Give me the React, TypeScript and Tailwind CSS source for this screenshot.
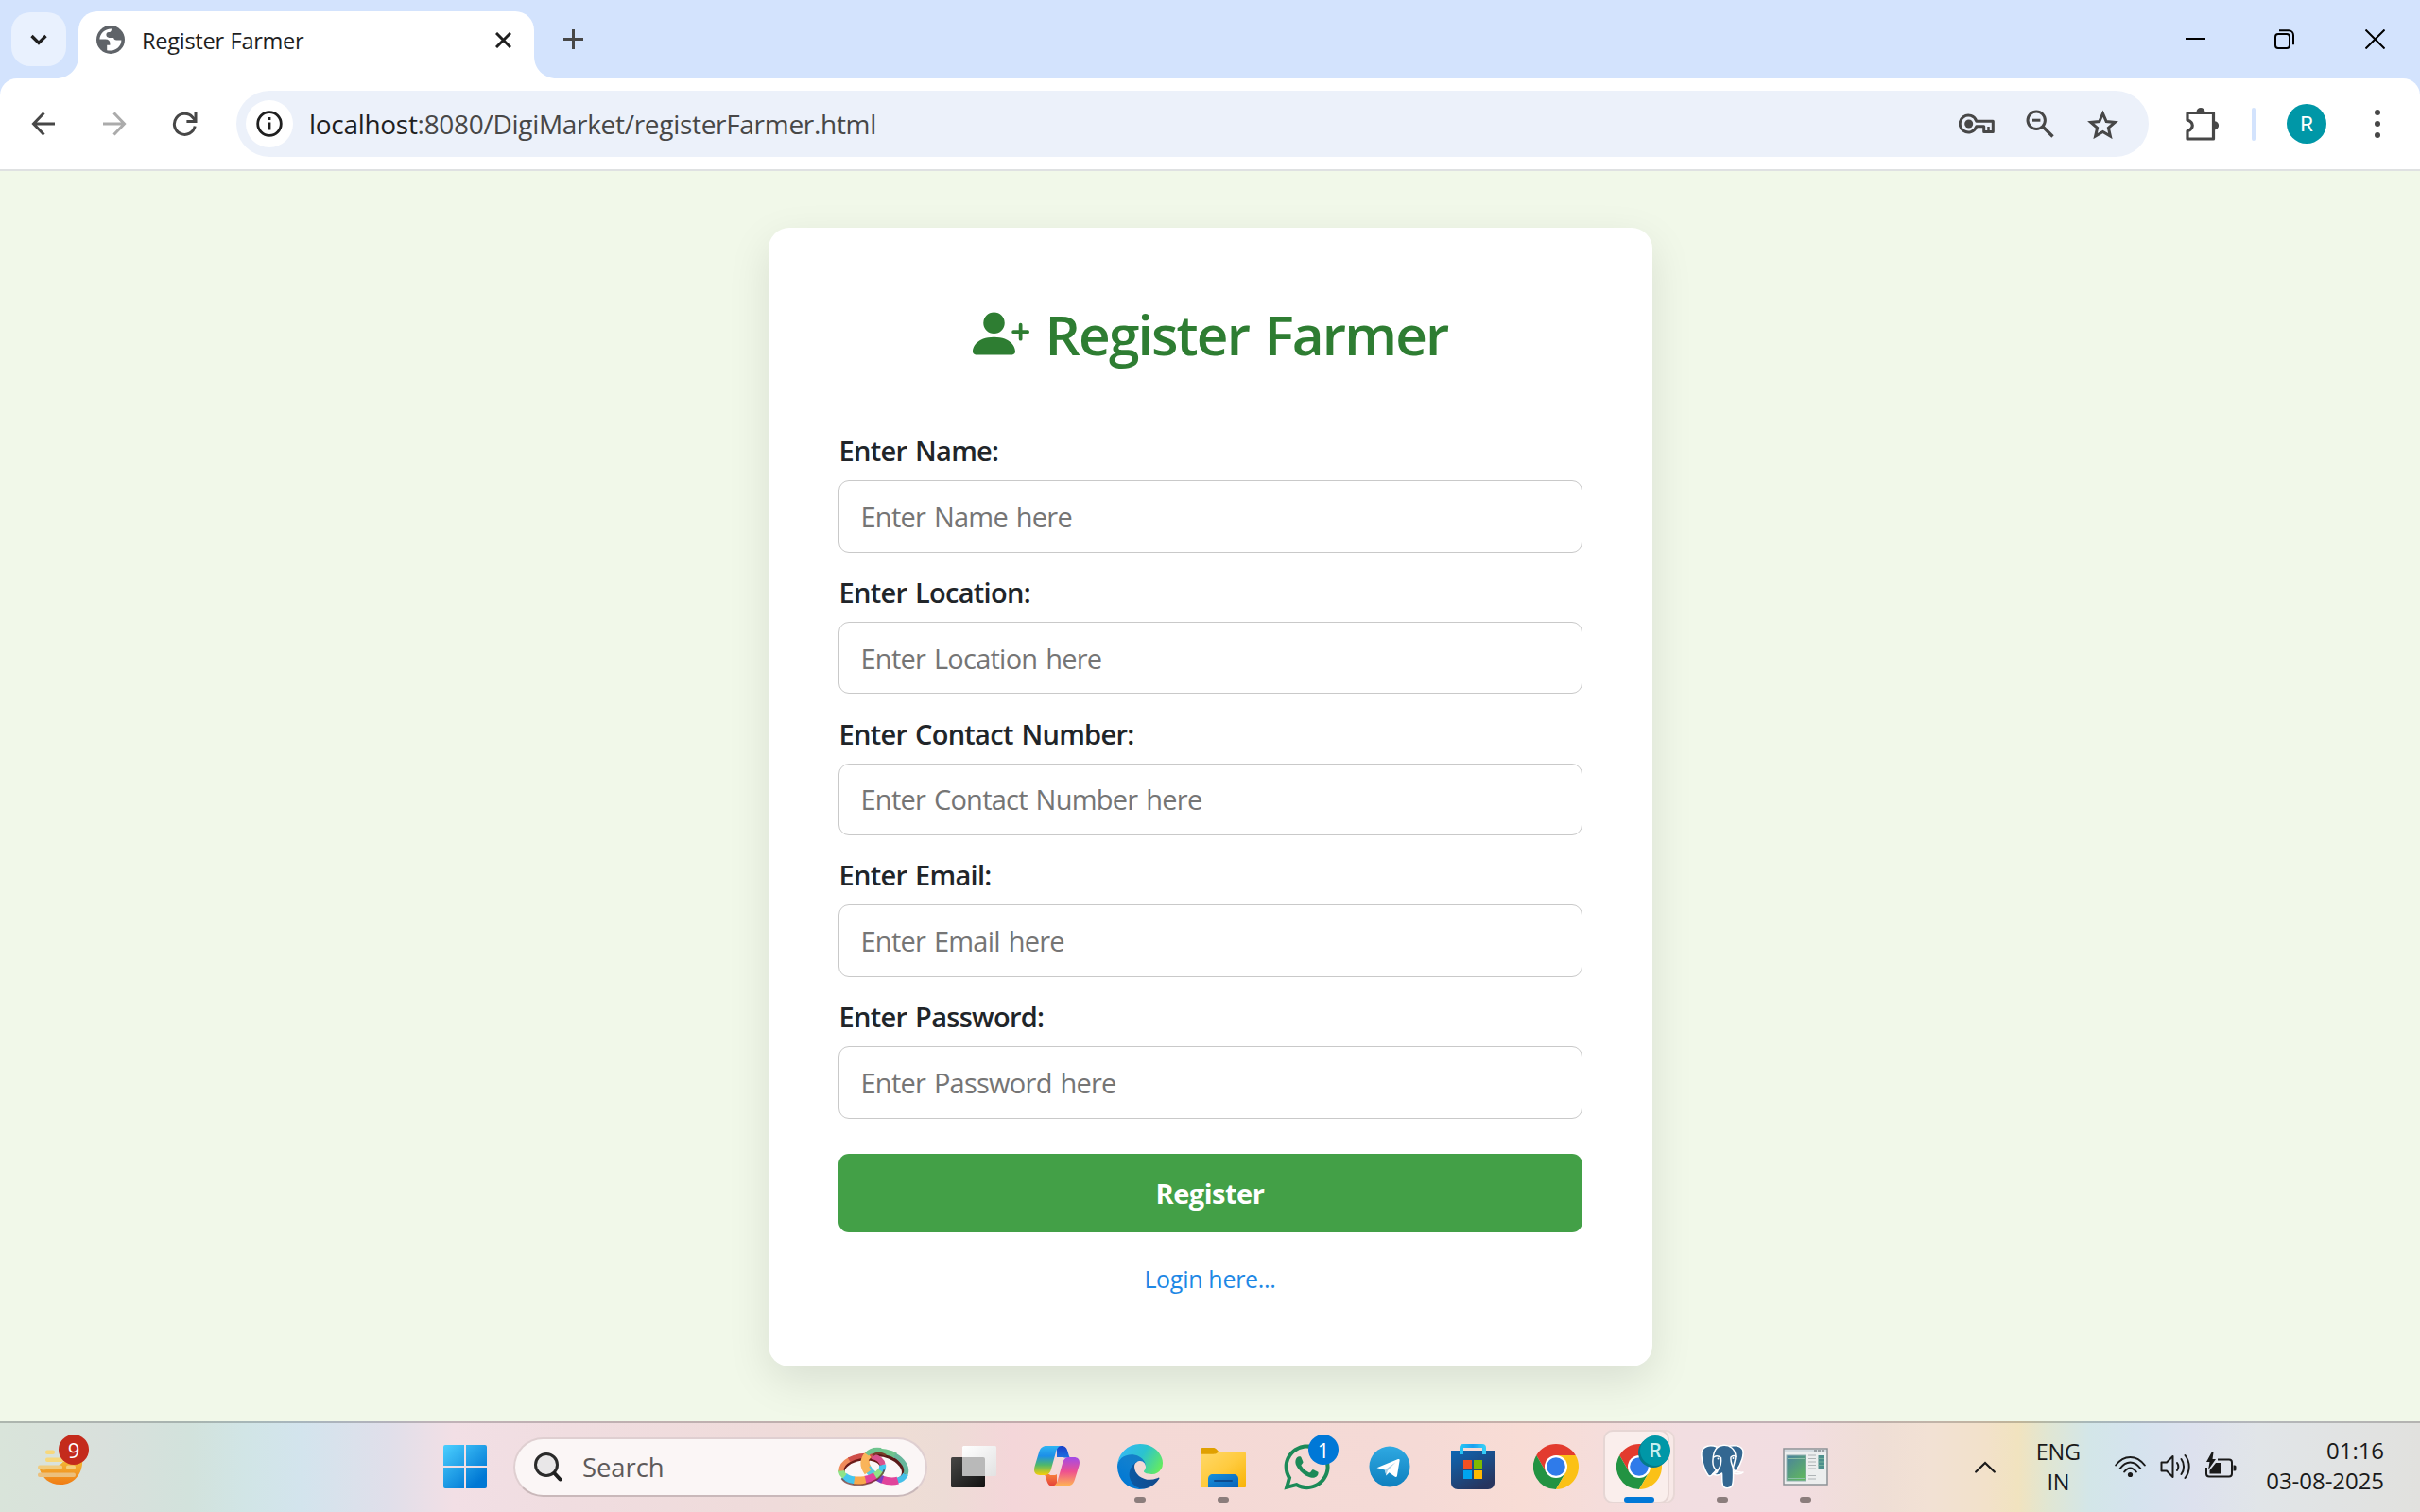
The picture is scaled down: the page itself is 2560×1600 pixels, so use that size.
import type { ReactNode } from "react";
import { BsPersonPlusFill } from "react-icons/bs";
import { FaWhatsapp } from "react-icons/fa";

/* ---------- Browser icons ---------- */

function Globe() {
  return (
    <svg className="size-[30px]" viewBox="0 0 30 30">
      <circle cx="15" cy="15" r="15" fill="#5f6368" />
      <path
        d="M16 3.4C9 3.2 3.6 8.4 3.4 14.6h6.2c3.2 0 4.8 1.6 4.8 4.6v1.6h-3.2v5.4c7.800 1.800 15.200-3.400 15.200-10.800h-5.200c-1.800 0-2.800-.8-3-2.400h-4.600c-2-.2-3.200-1.400-3.200-3.200 0-1.600 1-2.600 2.600-2.800 1.800 0 3-1 3-3.600z"
        fill="#fff"
      />
    </svg>
  );
}

function Key() {
  return (
    <svg className="h-[26px] w-[39px]" viewBox="0 0 39 26" fill="none" stroke="#474747" strokeWidth="3">
      <path d="M18.800 10.200h17.500v11.200h-9.600v-5.600h-7.900a9 9 0 1 1 0-5.600z" strokeLinejoin="round" />
      <circle cx="10.700" cy="13" r="4.500" fill="#474747" stroke="none" />
      <path d="M31.500 16v5" strokeWidth="2.500" />
    </svg>
  );
}

function ZoomOut() {
  return (
    <svg className="size-[30px]" viewBox="0 0 30 30" fill="none" stroke="#474747" strokeWidth="3">
      <circle cx="11.200" cy="11.200" r="9.200" />
      <path d="M18 18l10.500 10.500" strokeWidth="3.400" />
      <path d="M7 11.200h8.400" />
    </svg>
  );
}

function Star() {
  return (
    <svg className="h-[31px] w-[33px]" viewBox="0 0 33 31" fill="none" stroke="#474747" strokeWidth="3">
      <path d="M16.500 4.200l3.700 8.300 9.100.9-6.900 6 2 8.700-7.900-4.600-7.900 4.600 2-8.700-6.900-6 9.100-.9z" />
    </svg>
  );
}

function Puzzle() {
  return (
    <svg className="size-[36px]" viewBox="0 0 36 36">
      <path
        d="M3 6.500h26.500v27.500h-27.500v-8.200c7-2.600 7-9.400 0-11.800v-7z"
        fill="none"
        stroke="#474747"
        strokeWidth="3.200"
        strokeLinejoin="round"
      />
      <path d="M11.500 5.500a4.500 4.500 0 0 1 9 0zM30.500 15.200a4.600 4.600 0 0 1 0 9.200z" fill="#474747" />
    </svg>
  );
}

/* ---------- Browser window ---------- */

function TabStrip() {
  return (
    <div className="flex h-[83px] items-end bg-[#d3e3fd]">
      <div className="mb-[13px] ml-3 flex h-[57px] w-[58px] items-center justify-center rounded-[20px] bg-[#e9f1fe]">
        <svg className="h-[12px] w-[18px]" viewBox="0 0 18 12" fill="none" stroke="#1f1f1f" strokeWidth="3.300">
          <path d="M1.500 2L9 9.500 16.500 2" />
        </svg>
      </div>
      <div className="relative ml-[13px] flex h-[71px] w-[482px] items-center rounded-t-[20px] bg-white pb-[11px] pl-[19px] pr-[24px]">
        <Globe />
        <div className="ml-[18px] flex-1 pt-[2px] text-[23.600px] leading-8 tracking-[-0.300px] text-[#1f1f1f] [word-spacing:1px]">
          Register Farmer
        </div>
        <svg className="size-[17px]" viewBox="0 0 17 17" stroke="#1f1f1f" strokeWidth="3">
          <path d="M1 1l15 15M16 1L1 16" />
        </svg>
        <svg className="absolute bottom-0 -left-6 size-6" viewBox="0 0 24 24">
          <path d="M24 0v24H0C14 24 24 14 24 0z" fill="#fff" />
        </svg>
        <svg className="absolute -right-6 bottom-0 size-6" viewBox="0 0 24 24">
          <path d="M0 0v24h24C10 24 0 14 0 0z" fill="#fff" />
        </svg>
      </div>
      <svg className="mb-[31px] ml-[31px] size-[21px]" viewBox="0 0 21 21" stroke="#474747" strokeWidth="3">
        <path d="M10.500 0v21M0 10.500h21" />
      </svg>
      <div className="mr-[37px] mb-[31px] ml-auto flex items-center">
        <svg className="h-[21px] w-[21px]" viewBox="0 0 21 21" stroke="#000" strokeWidth="2">
          <path d="M0 10h21" />
        </svg>
        <svg className="mr-[75px] ml-[73px] h-[21px] w-[21px]" viewBox="0 0 21 21" fill="none" stroke="#000" strokeWidth="2">
          <rect x="1" y="5" width="15" height="15" rx="3" />
          <path d="M5 1.200h10a5 5 0 0 1 5 5v10" />
        </svg>
        <svg className="h-[21px] w-[21px]" viewBox="0 0 21 21" stroke="#000" strokeWidth="2">
          <path d="M.5.500l20 20M20.500.500l-20 20" />
        </svg>
      </div>
    </div>
  );
}

function Toolbar() {
  return (
    <div className="bg-[#d3e3fd]">
      <div className="flex h-[98px] items-center rounded-t-[18px] border-b-2 border-[#dfe1e2] bg-white">
        <svg className="ml-[33px] size-[26px]" viewBox="0 0 26 26" fill="none" stroke="#474747" strokeWidth="3">
          <path d="M25 13H3M13.500 1.500L2.500 13l11 11.500" />
        </svg>
        <svg className="ml-[49px] size-[26px]" viewBox="0 0 26 26" fill="none" stroke="#ababab" strokeWidth="3">
          <path d="M1 13h22M12.500 1.500l11 11.500-11 11.500" />
        </svg>
        <svg className="ml-[48px] size-[27px]" viewBox="0 0 27 27" fill="none" stroke="#474747" strokeWidth="3">
          <path d="M24.200 15.500A11 11 0 1 1 21.600 6l3 3.300" />
          <path d="M25 1v9.600h-9.600" />
        </svg>
        <div className="ml-[41px] flex h-[70px] w-[2023px] items-center rounded-full bg-[#ecf1fa] pl-[10px]">
          <div className="flex size-[50px] items-center justify-center rounded-full bg-white">
            <svg className="size-[28px]" viewBox="0 0 28 28" fill="none" stroke="#1f1f1f" strokeWidth="2.800">
              <circle cx="14" cy="14" r="12.300" />
              <path d="M14 12.500v8M14 7v3" />
            </svg>
          </div>
          <div className="ml-[17px] flex-1 text-[28px] tracking-[-0.300px] text-[#474747]">
            <span className="text-[#1f1f1f]">localhost</span>:8080/DigiMarket/registerFarmer.html
          </div>
          <Key />
          <div className="ml-[32px]">
            <ZoomOut />
          </div>
          <div className="mr-[32px] ml-[35px]">
            <Star />
          </div>
        </div>
        <div className="ml-[39px]">
          <Puzzle />
        </div>
        <div className="ml-[34px] h-[35px] w-[4px] rounded-full bg-[#d3e3fd]" />
        <div className="ml-[33px] flex size-[42px] items-center justify-center rounded-full bg-[#0097a7] font-['Roboto'] text-[22px] text-white">
          R
        </div>
        <svg className="ml-[51px] h-[30px] w-[6px]" viewBox="0 0 6 30" fill="#474747">
          <circle cx="3" cy="3" r="3" />
          <circle cx="3" cy="15" r="3" />
          <circle cx="3" cy="27" r="3" />
        </svg>
      </div>
    </div>
  );
}

function Field({ name }: { name: string }) {
  return (
    <div className="h-[149.750px]">
      <label className="block h-[45px] pt-px pl-px text-[29px] leading-[45px] font-semibold tracking-[-0.720px] text-[#212529] [word-spacing:2px]">
        Enter {name}:
      </label>
      <input
        className="mt-[10px] block h-[76.500px] w-full rounded-[11px] border border-[#c9c9c9] bg-white px-[23px] text-[29px] tracking-[-0.750px] [word-spacing:2px] placeholder:text-[#757575]"
        placeholder={`Enter ${name} here`}
      />
    </div>
  );
}

function Page() {
  return (
    <main className="flex flex-1 items-start justify-center bg-[#f1f8e9] pt-[60px]">
      <div className="h-[1205px] w-[935px] rounded-[22px] bg-white px-[74px] pt-[76px] shadow-[0_15px_45px_rgba(0,0,0,0.1)]">
        <h1 className="mb-[64px] flex h-[72px] items-center justify-center text-[58.500px] font-[560] whitespace-nowrap text-[#2e7d32]">
          <BsPersonPlusFill className="size-[60px]" />
          <span className="ml-[17px] pt-px tracking-[-1.850px] [word-spacing:3px]">Register Farmer</span>
        </h1>
        {["Name", "Location", "Contact Number", "Email", "Password"].map((n) => (
          <Field key={n} name={n} />
        ))}
        <button className="mt-[19px] h-[83px] w-full rounded-[11px] bg-[#43a047] pt-px text-[29px] font-bold tracking-[-0.500px] text-white">
          Register
        </button>
        <div className="mt-[30px] text-center text-[25px] leading-[38px] tracking-[-0.300px] text-[#1e88e5]">Login here...</div>
      </div>
    </main>
  );
}

/* ---------- Taskbar icons ---------- */

function Weather() {
  return (
    <div className="relative ml-10 h-[40px] w-[48px]">
      <svg className="size-full" viewBox="0 0 48 40">
        <defs>
          <linearGradient id="sun" x1="0" y1="0" x2="0" y2="1">
            <stop offset="0" stopColor="#f3c33c" />
            <stop offset="1" stopColor="#f07c14" />
          </linearGradient>
        </defs>
        <path d="M2 23c12 1 22-3 26-10l8-4h11C49 25 40 39 24 39 12 39 5 32 2 23z" fill="url(#sun)" />
        <g fill="#f7d87c">
          <rect x="8" y="2.500" width="10" height="4.500" rx="2" />
          <rect x="8" y="10.500" width="24" height="4.500" rx="2" />
          <rect x="0" y="18.500" width="26" height="4.500" rx="2" fill="#f0cc80" />
          <rect x="30" y="18.500" width="10" height="4.500" rx="2" fill="#f4cf7c" />
          <rect x="0" y="26.500" width="40" height="4.500" rx="2" fill="#ecc07c" />
        </g>
      </svg>
      <span className="absolute -top-[14px] left-[22px] flex size-8 items-center justify-center rounded-full bg-[#c42b1c] text-[22px] leading-none text-white">
        9
      </span>
    </div>
  );
}

function StartLogo() {
  return (
    <svg className="ml-[381px] size-[46px]" viewBox="0 0 46 46">
      <defs>
        <linearGradient id="win" gradientUnits="userSpaceOnUse" x1="0" y1="0" x2="36" y2="40">
          <stop offset="0" stopColor="#4cd0ff" />
          <stop offset="1" stopColor="#0078d4" />
        </linearGradient>
      </defs>
      <path
        d="M2 0h20v22H0V2a2 2 0 0 1 2-2zM24 0h20a2 2 0 0 1 2 2v20H24zM0 24h22v22H2a2 2 0 0 1-2-2zM24 24h22v20a2 2 0 0 1-2 2H24z"
        fill="url(#win)"
      />
    </svg>
  );
}

const leftRing = [
  { c: "#45c6ee", w: 7, d: "8 200", o: 0 },
  { c: "#8fe388", w: 8, d: "9 200", o: -7 },
  { c: "#e0449b", w: 8.5, d: "12 200", o: -15 },
  { c: "#f9a84d", w: 8.5, d: "13 200", o: -26 },
  { c: "#45c6ee", w: 8, d: "12 200", o: -38 },
  { c: "#8fe388", w: 6.5, d: "8 200", o: -49 },
  { c: "#f08a5a", w: 5, d: "16 200", o: -56 },
  { c: "#cf4f4a", w: 5, d: "26 200", o: -71 },
  { c: "#d8508c", w: 6, d: "20 200", o: -96 },
];

const rightRing = [
  { c: "#45bfe8", w: 6, d: "12 200", o: 0 },
  { c: "#e0449b", w: 8, d: "17 200", o: -11 },
  { c: "#7a3fc4", w: 8, d: "12 200", o: -27 },
  { c: "#56c8e0", w: 8, d: "11 200", o: -38 },
  { c: "#f9a84d", w: 8, d: "16 200", o: -48 },
  { c: "#6fc48e", w: 6, d: "30 200", o: -63 },
  { c: "#67b79c", w: 5, d: "34 200", o: -92 },
];

function Rings() {
  return (
    <svg className="h-[42px] w-[76px] overflow-visible" viewBox="0 0 76 42" fill="none">
      <g transform="rotate(22 50 21)">
        <ellipse cx="49.500" cy="22.500" rx="21" ry="12.500" stroke="#5a1a18" strokeWidth="4" />
        {rightRing.map((s) => (
          <ellipse key={s.o} cx="50" cy="20.500" rx="22.500" ry="14.500" stroke={s.c} strokeWidth={s.w} strokeDasharray={s.d} strokeDashoffset={s.o} />
        ))}
      </g>
      <g transform="rotate(-9 25 23)">
        <ellipse cx="25" cy="24" rx="20.500" ry="11" stroke="#6a1a18" strokeWidth="3.500" />
        {leftRing.map((s) => (
          <ellipse key={s.o} cx="25" cy="22.500" rx="22" ry="13" stroke={s.c} strokeWidth={s.w} strokeDasharray={s.d} strokeDashoffset={s.o} />
        ))}
        <path d="M2 30c6 13 38 14 46 -2" stroke="#5a1a18" strokeWidth="1.800" opacity=".65" />
      </g>
      <path d="M31 27c-5-7-5-14 1-19" stroke="#f9b45a" strokeWidth="8" />
      <path d="M30 8c4-5 9-5.500 15-4.500" stroke="#6fc48e" strokeWidth="5" />
      <path d="M36 9c4-3 9-3 14 0" stroke="#7a3a28" strokeWidth="2.500" />
    </svg>
  );
}

function SearchBox() {
  return (
    <div className="ml-7 flex h-[63px] w-[438px] items-center rounded-full border-2 border-x-[#dfcfd1] border-t-[#dfcfd1] border-b-[#c9b8ba] bg-[#fbf6f6] pr-[16px] pl-[20px]">
      <svg className="size-[31px]" viewBox="0 0 31 31" fill="none">
        <circle cx="13" cy="13" r="11.500" fill="#e9e7e8" stroke="#2a2a2a" strokeWidth="3" />
        <path d="M21.500 22l6 6.500" stroke="#1f1f1f" strokeWidth="4" strokeLinecap="round" />
      </svg>
      <span className="ml-[20px] flex-1 pt-[2px] text-[27.500px] leading-9 tracking-[-0.100px] text-[#5e5a5a]">Search</span>
      <Rings />
    </div>
  );
}

function TaskView() {
  return (
    <svg className="size-12" viewBox="0 0 48 48">
      <defs>
        <linearGradient id="tv1" x1="0" y1="0" x2="1" y2="1">
          <stop offset="0" stopColor="#474645" />
          <stop offset="1" stopColor="#111" />
        </linearGradient>
        <linearGradient id="tv2" x1="0" y1="0" x2="1" y2="1">
          <stop offset="0" stopColor="#fff" />
          <stop offset="1" stopColor="#e2e2e2" />
        </linearGradient>
      </defs>
      <rect x="0" y="14" width="36" height="32" rx="1.500" fill="url(#tv1)" />
      <rect x="12" y="2" width="36" height="32" rx="1.500" fill="url(#tv2)" />
      <path d="M12 14h22a2 2 0 0 1 2 2v18H13.500a1.500 1.500 0 0 1-1.500-1.500z" fill="#b9b9b9" />
    </svg>
  );
}

function Copilot() {
  return (
    <svg className="size-12" viewBox="0 0 48 48">
      <defs>
        <linearGradient id="cp1" x1="0" y1="0" x2="0" y2="1">
          <stop offset="0" stopColor="#2fb4f2" />
          <stop offset=".35" stopColor="#1c8fe8" />
          <stop offset=".65" stopColor="#4fb86a" />
          <stop offset="1" stopColor="#f8cf08" />
        </linearGradient>
        <linearGradient id="cp2" x1="0" y1="0" x2="0" y2="1">
          <stop offset="0" stopColor="#a24ae8" />
          <stop offset=".5" stopColor="#ee5090" />
          <stop offset="1" stopColor="#ffb552" />
        </linearGradient>
        <linearGradient id="cp3" x1="0" y1="0" x2="0" y2="1">
          <stop offset="0" stopColor="#1a3fc8" />
          <stop offset="1" stopColor="#1c6fe0" />
        </linearGradient>
        <linearGradient id="cp4" x1="0" y1="0" x2="0" y2="1">
          <stop offset="0" stopColor="#f7823c" />
          <stop offset="1" stopColor="#e5403a" />
        </linearGradient>
      </defs>
      <path d="M24 2h5c4 0 5.500 2.500 6.500 6l1.500 5c.5 1 1 1.500 3 1.500H24z" fill="url(#cp3)" />
      <path d="M24 44.500h-5c-3 0-4.500-2-5.500-5l-1.500-5c-.6-2-1.500-2.500-4-2.500h16z" fill="url(#cp4)" />
      <path d="M13 2h16c-3.500 0-5 3-6 6.500l-5 18C17 30.500 15 33 11 33H6c-5 0-7-3.500-5.500-9L5 9c1.500-5 4-7 8-7z" fill="url(#cp1)" />
      <path d="M35 44.500H19c3.500 0 5-3 6-6.500l5-17.500c1-4 3-6.500 7-6.500h5c5 0 7 3.500 5.500 9L43 37.500c-1.500 5-4 7-8 7z" fill="url(#cp2)" />
      <path d="M24 14h8c-2 1-3.500 3.500-4.300 6.500L25 30c-.6 2-1.500 3-3.500 3h-5.500c1-.8 2-3 2.600-5.500l2.700-9.500c.6-2 1.300-3.300 2.700-4z" fill="#f5d9d8" />
    </svg>
  );
}

function Edge() {
  return (
    <svg className="size-12" viewBox="0 0 256 256">
      <defs>
        <linearGradient id="ed1" x1="0" y1="1" x2="1" y2="1">
          <stop offset="0" stopColor="#0c59a4" />
          <stop offset="1" stopColor="#114a8b" />
        </linearGradient>
        <linearGradient id="ed2" x1="1" y1="0" x2=".4" y2="1">
          <stop offset="0" stopColor="#1b7fbf" />
          <stop offset=".5" stopColor="#0f7fd0" />
          <stop offset="1" stopColor="#0078d4" />
        </linearGradient>
        <linearGradient id="ed3" x1="0" y1=".3" x2="1" y2=".7">
          <stop offset="0" stopColor="#35b8f5" />
          <stop offset=".5" stopColor="#2bc3cf" />
          <stop offset="1" stopColor="#66eb5e" />
        </linearGradient>
      </defs>
      <g transform="translate(-4.630 -4.920)">
        <path
          d="M235.680 195.460a93.730 93.730 0 0 1-10.540 4.710 101.870 101.870 0 0 1-35.900 6.460c-47.320 0-88.540-32.550-88.540-74.320A31.480 31.480 0 0 1 117.130 105c-42.800 1.800-53.800 46.400-53.800 72.530 0 73.880 68.090 81.370 82.760 81.370 7.910 0 19.840-2.300 27-4.560l1.310-.44a128.340 128.340 0 0 0 66.600-52.800 4 4 0 0 0-5.320-5.640z"
          fill="url(#ed1)"
        />
        <path
          d="M110.340 246.340A79.200 79.200 0 0 1 87.600 225a80.720 80.720 0 0 1 29.530-120c3.120-1.470 8.450-4.130 15.540-4a32.350 32.350 0 0 1 25.690 13 31.880 31.880 0 0 1 6.360 18.660c0-.21 24.460-79.600-80-79.600-43.900 0-80 41.660-80 78.210a130.150 130.150 0 0 0 12.110 56 128 128 0 0 0 156.380 67.110 75.550 75.550 0 0 1-62.780-8z"
          fill="url(#ed2)"
        />
      </g>
      <path
        d="M152.330 148.860c-.81 1.050-3.300 2.500-3.300 5.660 0 2.610 1.700 5.120 4.720 7.230 14.380 10 41.490 8.680 41.560 8.680a59.560 59.560 0 0 0 30.270-8.350A61.380 61.380 0 0 0 256 109.190c.26-22.410-8-37.310-11.340-43.910C223.460 23.840 177.720 0 128 0A128 128 0 0 0 0 126.200c.48-36.540 36.800-66.050 80-66.050 3.500 0 23.460.34 42 10.070 16.340 8.580 24.900 18.940 30.850 29.210 6.180 10.670 7.280 24.150 7.280 29.520s-2.740 13.330-7.800 19.910z"
        fill="url(#ed3)"
      />
    </svg>
  );
}

function Folder() {
  return (
    <svg className="size-12" viewBox="0 0 48 48">
      <defs>
        <linearGradient id="fo1" x1="0" y1="0" x2="1" y2="1">
          <stop offset="0" stopColor="#ffd868" />
          <stop offset=".5" stopColor="#ffcb3f" />
          <stop offset="1" stopColor="#f8b306" />
        </linearGradient>
        <linearGradient id="fo2" x1="0" y1="0" x2="1" y2="1">
          <stop offset="0" stopColor="#1590dd" />
          <stop offset="1" stopColor="#0a62b8" />
        </linearGradient>
      </defs>
      <path d="M0 6a2 2 0 0 1 2-2h11c2 0 3 .6 4 1.800L20 9v8H0z" fill="#e0a000" />
      <path
        d="M0 12c0-.8.600-1.200 1.500-1.200h12c2 0 3-.4 4-1.200.800-.6 1.500-1 3-1H46.500c1 0 1.500.6 1.500 1.500V44.500c0 1-.5 1.500-1.500 1.500h-45c-1 0-1.500-.5-1.500-1.500z"
        fill="url(#fo1)"
      />
      <path d="M8 46V37c0-3 2-5 5-5h22c3 0 5 2 5 5v9z" fill="url(#fo2)" />
      <path d="M15 39h18" stroke="#0a4b90" strokeWidth="2" strokeLinecap="round" />
    </svg>
  );
}

function WhatsApp() {
  return (
    <div className="relative flex size-12 items-center justify-center">
      <FaWhatsapp className="size-[55px] shrink-0 text-[#1c8a58]" />
      <span className="absolute -top-[10px] left-[26px] flex size-8 items-center justify-center rounded-full bg-[#0078d7] text-[22px] leading-none text-white">
        1
      </span>
    </div>
  );
}

function Telegram() {
  return (
    <svg className="size-[44px]" viewBox="0 0 44 44">
      <defs>
        <linearGradient id="tg" x1="0" y1="0" x2="0" y2="1">
          <stop offset="0" stopColor="#2fa9e2" />
          <stop offset="1" stopColor="#0e7fbe" />
        </linearGradient>
      </defs>
      <circle cx="22" cy="22" r="21.500" fill="url(#tg)" />
      <path d="M8.500 23.200L31 14c1.200-.4 1.800.2 1.600 1.400L30 31.500c-.2 1.500-1.400 1.900-2.600 1l-5.800-4.200-3.200 3.200-1.400-6z" fill="#fff" />
      <path d="M17 25.500l11.500-8.200-8.600 9-1.600 5z" fill="#a9cfe6" />
    </svg>
  );
}

function Store() {
  return (
    <svg className="size-12" viewBox="0 0 48 48">
      <defs>
        <linearGradient id="st1" x1="0" y1="0" x2=".6" y2="1">
          <stop offset="0" stopColor="#0d67b5" />
          <stop offset="1" stopColor="#27355f" />
        </linearGradient>
        <linearGradient id="st2" x1="0" y1="0" x2="1" y2="0">
          <stop offset="0" stopColor="#25c4f4" />
          <stop offset=".5" stopColor="#1aa0f0" />
          <stop offset="1" stopColor="#35cdf6" />
        </linearGradient>
      </defs>
      <path d="M1 7h46v34c0 4-3 7-7 7H8c-4 0-7-3-7-7z" fill="url(#st1)" />
      <path d="M12 11V4c0-1.200.8-2 2-2h20c1.200 0 2 .8 2 2v7" fill="none" stroke="url(#st2)" strokeWidth="4" />
      <rect x="14" y="17" width="9" height="9" fill="#f25022" />
      <rect x="25" y="17" width="9" height="9" fill="#7fba00" />
      <rect x="14" y="28" width="9" height="9" fill="#00a4ef" />
      <rect x="25" y="28" width="9" height="9" fill="#ffb900" />
    </svg>
  );
}

function Chrome() {
  return (
    <svg className="size-12" viewBox="0 0 48 48">
      <path d="M24 12h20.780A24 24 0 0 0 3.215 12L13.600 30z" fill="#e33b2e" />
      <path d="M13.608 30L3.215 12A24 24 0 0 0 24 48l10.390-18z" fill="#229342" />
      <path d="M34.392 30L24 48A24 24 0 0 0 44.780 12H24z" fill="#fbc116" />
      <circle cx="24" cy="24" r="12" fill="#fff" />
      <circle cx="24" cy="24" r="9.800" fill="#2f7bea" />
    </svg>
  );
}

function ActiveChrome() {
  return (
    <div className="relative h-[78px] w-[76px]">
      <div className="absolute top-0 right-0 h-full w-[20px] rounded-r-[10px] border-2 border-[#e8d8d6] bg-[#f8e9e7]" />
      <div className="absolute top-0 left-0 flex h-full w-[70px] items-center rounded-[10px] border-2 border-[#e6d6d4] bg-[#faeeec] pl-[12px]">
        <Chrome />
        <span className="absolute top-[4px] left-[37px] flex size-8 items-center justify-center rounded-full bg-[#0097a7] font-['Roboto'] text-[20px] font-medium text-[#c5eef0] shadow-[-2px_2px_0_#04798a]">
          R
        </span>
      </div>
    </div>
  );
}

function Elephant() {
  return (
    <svg className="size-12" viewBox="0 0 48 48" stroke="#fff" strokeWidth="1.500" strokeLinejoin="round" strokeLinecap="round">
      <path d="M30 3c5-2.500 13-1.500 15.500 3 2 5-1.500 15-6.500 22-2 2.500-5 2-5-1z" fill="#336791" />
      <path d="M18 3C11 .500 3 2 2 9c-.6 7 3 19 7 24 1.500 1.600 3 1 4.500-.8l4.500-5z" fill="#336791" />
      <path
        d="M24 1.500c8-1 13.500 4 14 11 .2 6-2.500 9-2.500 14 0 5 .5 12-.8 16.500-1.200 4.500-9 5-10.300.5-1.200-4.500-.4-9-.9-12.500-2.500 2.500-8 2.500-9.500.500 2.500-.2 4.500-1.200 5-3-4-2-5.500-6-5-11.500C14.500 8 17 2.200 24 1.500z"
        fill="#336791"
      />
      <path d="M15 14c2-1.500 5-1.500 7.500.5.5 4 0 9-3 13M33.500 13.500c2-1.500 4-1.300 4.500 0M33 14c-.6 5 1.500 8.500 3 13M36 31c4 1.200 8 1 10-1-2.500.4-5 .2-9.500-2" fill="none" />
      <circle cx="19.500" cy="15.500" r="1" fill="#fff" stroke="none" />
      <circle cx="35.500" cy="15" r="1" fill="#fff" stroke="none" />
    </svg>
  );
}

function AppWindow() {
  return (
    <svg className="size-12" viewBox="0 0 48 48">
      <defs>
        <linearGradient id="aw" x1="0" y1="0" x2=".7" y2="1">
          <stop offset="0" stopColor="#4a80a0" />
          <stop offset="1" stopColor="#5fb560" />
        </linearGradient>
      </defs>
      <rect x="1" y="5" width="46" height="38" fill="#eceeee" stroke="#8d9296" strokeWidth="1.500" />
      <rect x="2" y="6" width="44" height="3" fill="#d3dbe0" />
      <path d="M33 7h12" stroke="#9aa0a4" strokeWidth="2" strokeDasharray="3 1" />
      <rect x="4" y="12" width="20" height="27" fill="url(#aw)" stroke="#8fb0b0" strokeWidth="1" />
      <path d="M5 15.500h18M5 36.500h18" stroke="#8cc0a8" strokeWidth="1" />
      <path d="M27 12h8M27 15.500h8M27 19h8M27 22.500h8M27 26h8M27 33.500h8M27 37h8" stroke="#aeb4b6" strokeWidth="1.200" />
      <rect x="37.500" y="12" width="5.500" height="15" fill="#4d8f8c" />
      <path d="M37.500 15.500h5.500M37.500 19h5.500M37.500 22.500h5.500" stroke="#7fb8a0" strokeWidth=".8" />
    </svg>
  );
}

function Slot({ children, open, active }: { children: ReactNode; open?: boolean; active?: boolean }) {
  return (
    <div className="relative flex h-full w-[88px] items-center justify-center">
      {children}
      {open && <span className="absolute bottom-[8px] left-[38px] h-[6px] w-[12px] rounded-full bg-[#8b7d7c]" />}
      {active && <span className="absolute bottom-[8px] left-7 h-[6px] w-8 rounded-full bg-[#0078d7]" />}
    </div>
  );
}

function Tray() {
  return (
    <div className="ml-auto flex h-full items-center text-[24px] leading-8 text-[#1a1a1a]">
      <svg className="h-[13px] w-[22px]" viewBox="0 0 22 13" fill="none" stroke="#1a1a1a" strokeWidth="2.200" strokeLinecap="round">
        <path d="M1.200 11.500L11 2l9.800 9.500" />
      </svg>
      <div className="ml-[41px] w-[50px] text-center text-[23.500px] tracking-[-0.300px]">
        ENG
        <br />
        IN
      </div>
      <svg className="ml-[35px] h-[24px] w-[33px]" viewBox="0 0 33 24" fill="none" stroke="#1a1a1a" strokeWidth="2" strokeLinecap="round">
        <path d="M1.200 10.500c8.500-11.500 22-11.500 30.600 0M5.700 14c6.300-8.800 15.300-8.800 21.600 0M10.200 17.500c4-5.500 8.600-5.500 12.600 0" />
        <circle cx="16.500" cy="20.500" r="2.600" fill="#1a1a1a" stroke="none" />
      </svg>
      <svg className="ml-[15px] h-[28px] w-[33px]" viewBox="0 0 33 28" fill="none" stroke="#1a1a1a" strokeWidth="2" strokeLinecap="round" strokeLinejoin="round">
        <path d="M1.500 9.500h5.500l6.500-6.500v22l-6.500-6.500H1.500zM18 10c1.600 2.400 1.600 5.600 0 8M22.500 6c3.400 4.500 3.400 11.500 0 16M26.500 2c5.600 7 5.600 17 0 24" />
      </svg>
      <svg className="-mt-[3px] ml-[14px] h-[28px] w-[35px]" viewBox="0 0 35 28" fill="none">
        <path d="M14 7.500h12a3 3 0 0 1 3 3v12a3 3 0 0 1-3 3H5a3 3 0 0 1-3-3V16" stroke="#1a1a1a" strokeWidth="2" />
        <path d="M30.500 13.500h1.500a1.500 1.500 0 0 1 1.500 1.500v3a1.500 1.500 0 0 1-1.500 1.500h-1.500z" fill="#1a1a1a" />
        <path d="M12 11h6v11.500H5.500V19z" fill="#1a1a1a" />
        <path d="M7.500 0L2 10h3.500L4 18.500 12 7H8.500L9.500 0z" fill="#1a1a1a" />
      </svg>
      <div className="-mt-[3px] mr-[38px] ml-[30px] text-right tracking-[-0.050px]">
        01:16
        <br />
        03-08-2025
      </div>
    </div>
  );
}

function Taskbar() {
  return (
    <footer className="flex h-[96px] items-center border-t-2 border-black/20 bg-[linear-gradient(90deg,#d9e4da_0px,#d9e0dc_110px,#d2e2dc_200px,#d1e5e6_260px,#d3e4ed_320px,#e0dfea_410px,#f2dfe5_480px,#f0dde0_600px,#efdbda_820px,#eeddd5_950px,#eddcd6_1000px,#f4d6d9_1070px,#f4d9d6_1160px,#f5dad6_1500px,#f8dcd5_1610px,#f2dee1_1780px,#f2dde1_1900px,#efded5_1990px,#f2e1d4_2040px,#f2e1ca_2100px,#f1e3bf_2135px,#e1e6d2_2165px,#d3e6e8_2210px,#d5e3ee_2260px,#dde1ee_2320px,#e1e5e8_2390px,#e1e1de_2560px)] bg-origin-border pb-[2px]">
      <Weather />
      <StartLogo />
      <SearchBox />
      <div className="ml-[5px] flex h-full items-center">
        <Slot><TaskView /></Slot>
        <Slot><Copilot /></Slot>
        <Slot open><Edge /></Slot>
        <Slot open><Folder /></Slot>
        <Slot><WhatsApp /></Slot>
        <Slot><Telegram /></Slot>
        <Slot><Store /></Slot>
        <Slot><Chrome /></Slot>
        <Slot active><ActiveChrome /></Slot>
        <Slot open><Elephant /></Slot>
        <Slot open><AppWindow /></Slot>
      </div>
      <Tray />
    </footer>
  );
}

export default function App() {
  return (
    <div className="flex h-[1600px] w-[2560px] flex-col overflow-hidden font-['Open_Sans','Noto_Sans',sans-serif]">
      <TabStrip />
      <Toolbar />
      <Page />
      <Taskbar />
    </div>
  );
}
